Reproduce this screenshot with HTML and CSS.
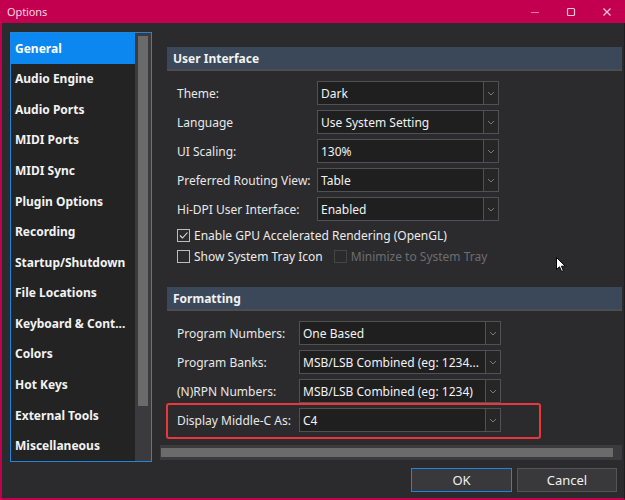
FILE: index.html
```html
<!DOCTYPE html>
<html>
<head>
<meta charset="utf-8">
<link rel="stylesheet" href="styles.css">
</head>
<body>
<div class="window">
  <div class="titlebar">
    <span class="title">Options</span>
    <div class="controls">
      <svg class="ctl" width="12" height="12" viewBox="0 0 12 12"><line x1="2" y1="6.5" x2="10" y2="6.5" stroke="#e27aa2" stroke-width="1"/></svg>
      <svg class="ctl" width="12" height="12" viewBox="0 0 12 12"><rect x="2.5" y="2.5" width="7" height="7" rx="1" fill="none" stroke="#f3c9da" stroke-width="1.2"/></svg>
      <svg class="ctl" width="12" height="12" viewBox="0 0 12 12"><path d="M2.5 2.5 L9.5 9.5 M9.5 2.5 L2.5 9.5" stroke="#f3c9da" stroke-width="1.2"/></svg>
    </div>
  </div>
  <div class="client">
    <div class="sidebar">
      <ul class="navlist">
        <li class="sel">General</li>
        <li>Audio Engine</li>
        <li>Audio Ports</li>
        <li>MIDI Ports</li>
        <li>MIDI Sync</li>
        <li>Plugin Options</li>
        <li>Recording</li>
        <li>Startup/Shutdown</li>
        <li>File Locations</li>
        <li>Keyboard &amp; Cont...</li>
        <li>Colors</li>
        <li>Hot Keys</li>
        <li>External Tools</li>
        <li>Miscellaneous</li>
      </ul>
      <div class="vscroll"><div class="vhandle"></div></div>
    </div>
    <div class="rightcol">
      <div class="scrollarea">
        <div class="section">
          <div class="sechead">User Interface</div>
          <div class="form form1">
            <span class="lbl">Theme:</span><div class="combo"><span class="val">Dark</span><span class="drop"><svg width="8" height="5" viewBox="0 0 8 5"><path d="M1 1 L4 4 L7 1" fill="none" stroke="#7a7a7a" stroke-width="1"/></svg></span></div>
            <span class="lbl">Language</span><div class="combo"><span class="val">Use System Setting</span><span class="drop"><svg width="8" height="5" viewBox="0 0 8 5"><path d="M1 1 L4 4 L7 1" fill="none" stroke="#7a7a7a" stroke-width="1"/></svg></span></div>
            <span class="lbl">UI Scaling:</span><div class="combo"><span class="val">130%</span><span class="drop"><svg width="8" height="5" viewBox="0 0 8 5"><path d="M1 1 L4 4 L7 1" fill="none" stroke="#7a7a7a" stroke-width="1"/></svg></span></div>
            <span class="lbl">Preferred Routing View:</span><div class="combo"><span class="val">Table</span><span class="drop"><svg width="8" height="5" viewBox="0 0 8 5"><path d="M1 1 L4 4 L7 1" fill="none" stroke="#7a7a7a" stroke-width="1"/></svg></span></div>
            <span class="lbl">Hi-DPI User Interface:</span><div class="combo"><span class="val">Enabled</span><span class="drop"><svg width="8" height="5" viewBox="0 0 8 5"><path d="M1 1 L4 4 L7 1" fill="none" stroke="#7a7a7a" stroke-width="1"/></svg></span></div>
          </div>
          <div class="checks">
            <div class="checkrow">
              <span class="cb"><svg width="11" height="11" viewBox="0 0 11 11"><path d="M2 5.5 L4.5 8 L9.5 2.5" fill="none" stroke="#e0e0e0" stroke-width="1.1"/></svg></span>
              <span class="cbl">Enable GPU Accelerated Rendering (OpenGL)</span>
            </div>
            <div class="checkrow">
              <span class="cb"></span>
              <span class="cbl">Show System Tray Icon</span>
              <span class="cb dis"></span>
              <span class="cbl disl">Minimize to System Tray</span>
            </div>
          </div>
        </div>
        <div class="section sec2">
          <div class="sechead">Formatting</div>
          <div class="form form2">
            <span class="lbl">Program Numbers:</span><div class="combo"><span class="val">One Based</span><span class="drop"><svg width="8" height="5" viewBox="0 0 8 5"><path d="M1 1 L4 4 L7 1" fill="none" stroke="#7a7a7a" stroke-width="1"/></svg></span></div>
            <span class="lbl">Program Banks:</span><div class="combo"><span class="val">MSB/LSB Combined (eg: 1234...</span><span class="drop"><svg width="8" height="5" viewBox="0 0 8 5"><path d="M1 1 L4 4 L7 1" fill="none" stroke="#7a7a7a" stroke-width="1"/></svg></span></div>
            <span class="lbl">(N)RPN Numbers:</span><div class="combo"><span class="val">MSB/LSB Combined (eg: 1234)</span><span class="drop"><svg width="8" height="5" viewBox="0 0 8 5"><path d="M1 1 L4 4 L7 1" fill="none" stroke="#7a7a7a" stroke-width="1"/></svg></span></div>
            <span class="lbl hl">Display Middle-C As:</span><div class="combo"><span class="val">C4</span><span class="drop"><svg width="8" height="5" viewBox="0 0 8 5"><path d="M1 1 L4 4 L7 1" fill="none" stroke="#7a7a7a" stroke-width="1"/></svg></span></div>
          </div>
        </div>
      </div>
      <div class="hscroll"><div class="hhandle"></div></div>
      <div class="buttons">
        <button class="btn ok">OK</button>
        <button class="btn">Cancel</button>
      </div>
    </div>
  </div>
  <svg class="cursor" width="12" height="18" viewBox="0 0 12 18"><path d="M0.5 0.5 L0.5 12.5 L3.5 9.8 L5.6 14.5 L7.4 13.7 L5.4 9.2 L9.3 9.2 Z" fill="#ffffff" stroke="#000000" stroke-width="1"/></svg>
</div>
</body>
</html>
```

FILE: styles.css
```css
* { box-sizing: border-box; }
html, body { margin: 0; padding: 0; }
body {
  width: 625px;
  height: 500px;
  overflow: hidden;
  background: #2b2b2d;
  font-family: "Noto Sans", "Open Sans", sans-serif;
  font-size: 12px;
  color: #e8e8e8;
}
.window {
  position: relative;
  width: 625px;
  height: 500px;
  display: flex;
  flex-direction: column;
  background: #2b2b2d;
}
.titlebar {
  height: 23px;
  flex: none;
  background: #c2004f;
  display: flex;
  align-items: center;
  justify-content: space-between;
  padding-left: 7px;
}
.title {
  font-size: 11px;
  color: #f6d6e2;
  letter-spacing: -0.1px;
}
.controls {
  display: flex;
  align-items: center;
  gap: 24px;
  padding-right: 12px;
}
.ctl { display: block; }
.client {
  flex: 1;
  display: flex;
  border-left: 2px solid #c2004f;
  border-bottom: 2px solid #c2004f;
  border-right: 1px solid #1d1d1f;
  padding: 9px 0 0 8px;
  gap: 8px;
}
.sidebar {
  width: 142px;
  height: 430px;
  border: 1px solid #1f86e0;
  background: #232324;
  display: flex;
}
.navlist {
  list-style: none;
  margin: 0;
  padding: 0;
  flex: 1;
  display: grid;
  grid-template-rows: repeat(14, 1fr);
}
.navlist li {
  display: flex;
  align-items: center;
  padding-left: 4px;
  font-weight: 700;
  font-size: 12px;
  color: #f2f2f2;
  white-space: nowrap;
}
.navlist li.sel {
  background: #0d87f0;
  color: #ffffff;
}
.vscroll {
  width: 16px;
  flex: none;
  background: #3b3b3d;
  padding: 3px 3px 0 3px;
}
.vhandle {
  height: 370px;
  background: #6a6a6a;
}
.rightcol {
  width: 462px;
  display: flex;
  flex-direction: column;
}
.scrollarea {
  height: 413px;
  overflow: hidden;
  padding: 15px 0 0 7px;
}
.sechead {
  height: 24px;
  background: #3a4859;
  border-bottom: 2px solid #4d4d4f;
  font-weight: 700;
  font-size: 12px;
  color: #f2f2f2;
  padding-left: 6px;
  display: flex;
  align-items: center;
}
.form {
  display: grid;
  row-gap: 5px;
  margin-top: 10px;
  padding-left: 10px;
  align-items: center;
}
.form1 { grid-template-columns: 140px 182px; }
.form2 { grid-template-columns: 122px 202px; }
.lbl {
  color: #e8e8e8;
  white-space: nowrap;
}
.combo {
  height: 24px;
  border: 1px solid #515153;
  background: #1f1f20;
  display: flex;
  align-items: stretch;
}
.val {
  flex: 1;
  padding-left: 3px;
  display: flex;
  align-items: center;
  color: #f2f2f2;
  white-space: nowrap;
  overflow: hidden;
}
.drop {
  width: 15px;
  flex: none;
  border-left: 1px solid #515153;
  background: #262627;
  display: flex;
  align-items: center;
  justify-content: center;
}
.drop svg { display: block; }
.checks {
  margin-top: 4px;
  padding-left: 10px;
}
.checkrow {
  height: 21px;
  display: flex;
  align-items: center;
}
.cb {
  width: 13px;
  height: 13px;
  border: 1px solid #bdbdbd;
  display: flex;
  align-items: center;
  justify-content: center;
  margin-right: 4px;
}
.cb svg { display: block; }
.cb.dis {
  border-color: #454547;
  margin-left: 11px;
}
.cbl { white-space: nowrap; color: #ececec; }
.cbl.disl { color: #6d6d6f; }
.sec2 { margin-top: 20px; }
.lbl.hl { position: relative; }
.lbl.hl::before {
  content: "";
  position: absolute;
  left: -11px;
  top: -9px;
  width: 371px;
  height: 32px;
  border: 2px solid #e8383c;
  border-radius: 3px;
  pointer-events: none;
}
.hscroll {
  height: 15px;
  background: #3b3b3d;
  padding: 3px 9px 3px 1px;
}
.hhandle {
  height: 100%;
  background: #6b6b6b;
}
.buttons {
  display: flex;
  justify-content: flex-end;
  gap: 5px;
  padding-right: 5px;
  margin-top: 8px;
}
.btn {
  height: 24px;
  width: 100px;
  background: #39393b;
  border: 1px solid #545456;
  color: #f0f0f0;
  font-family: "Noto Sans", "Open Sans", sans-serif;
  font-size: 13px;
  padding: 0;
}
.btn.ok {
  width: 101px;
  border-color: #1f86e0;
}
.cursor {
  position: absolute;
  left: 556px;
  top: 257px;
}
```
